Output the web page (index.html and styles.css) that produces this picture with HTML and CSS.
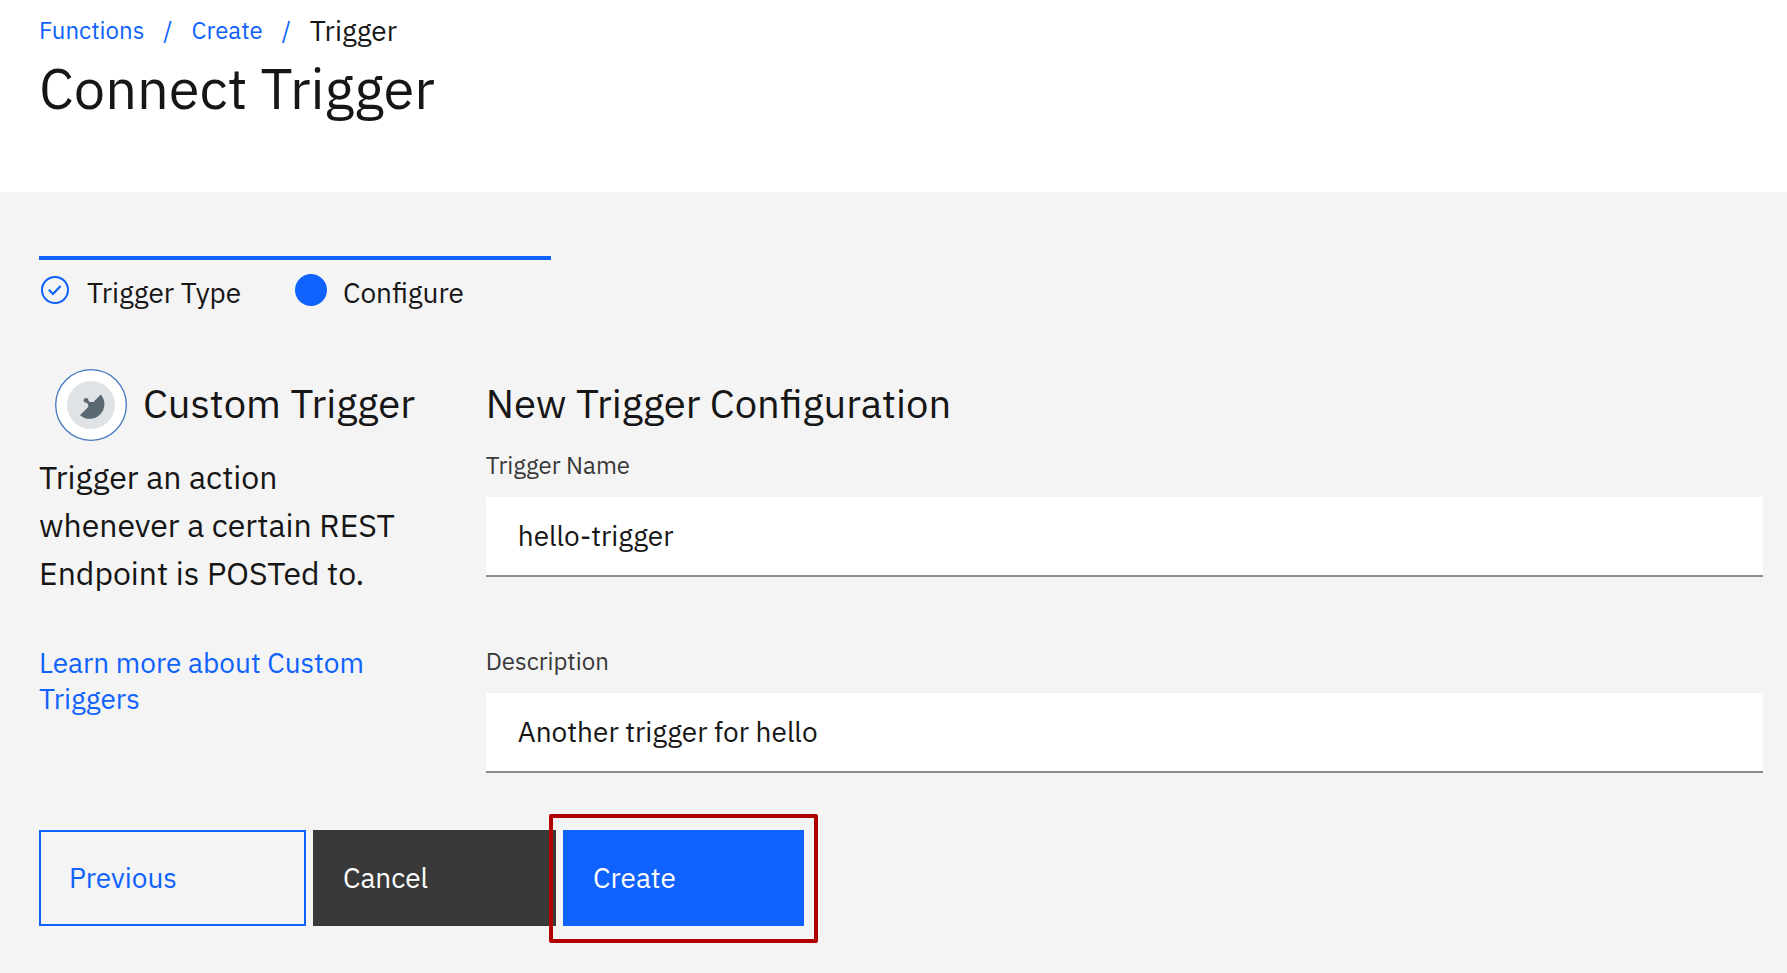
FILE: index.html
```html
<!DOCTYPE html>
<html lang="en">
<head>
<meta charset="utf-8">
<meta name="viewport" content="width=device-width, initial-scale=1">
<title>Connect Trigger</title>
<link rel="stylesheet" href="styles.css">
</head>
<body>
<header class="page-header">
  <nav class="breadcrumb" aria-label="Breadcrumb">
    <a class="link" href="#functions">Functions</a>
    <span class="separator">/</span>
    <a class="link" href="#create">Create</a>
    <span class="separator">/</span>
    <span class="current" aria-current="page">Trigger</span>
  </nav>
  <h1 class="page-title">Connect Trigger</h1>
</header>
<main class="content">
  <ol class="steps">
    <li class="step">
      <svg class="step-icon" viewBox="0 0 32 32" aria-hidden="true">
        <circle cx="16" cy="16" r="13" fill="none" stroke="#0f62fe" stroke-width="2"/>
        <path d="M9.800 15.800 14 20l7.600-8" fill="none" stroke="#0f62fe" stroke-width="2.200"/>
      </svg>
      <span class="step-label">Trigger Type</span>
    </li>
    <li class="step" aria-current="step">
      <svg class="step-icon" viewBox="0 0 32 32" aria-hidden="true">
        <circle cx="16" cy="16" r="16" fill="#0f62fe"/>
      </svg>
      <span class="step-label">Configure</span>
    </li>
  </ol>
  <form class="trigger-form">
    <div class="columns">
      <section class="summary">
        <div class="summary-head">
          <svg class="trigger-icon" viewBox="0 0 72 72" aria-hidden="true">
            <circle cx="36" cy="36" r="35.300" fill="#fff" stroke="#4178be" stroke-width="1.300"/>
            <circle cx="36" cy="36" r="24" fill="#dfe3e6"/>
            <path d="M45.700 25.400A14.700 14.700 0 0 1 25 46.200L33.200 38V35.500L31 33 32.800 31.500 34.800 33H38.500Z" fill="#5a6872"/>
            <circle cx="31" cy="31.300" r="2.400" fill="#5a6872"/>
          </svg>
          <h2 class="heading">Custom Trigger</h2>
        </div>
        <p class="summary-text">Trigger an action whenever a certain REST Endpoint is POSTed to.</p>
        <a class="link learn-more" href="#learn">Learn more about Custom Triggers</a>
      </section>
      <section class="configuration">
        <h2 class="heading">New Trigger Configuration</h2>
        <div class="fields">
          <div class="field">
            <label class="field-label" for="trigger-name">Trigger Name</label>
            <input class="field-input" id="trigger-name" type="text" value="hello-trigger">
          </div>
          <div class="field">
            <label class="field-label" for="description">Description</label>
            <input class="field-input" id="description" type="text" value="Another trigger for hello">
          </div>
        </div>
      </section>
    </div>
    <div class="actions">
      <button class="button button-outline" type="button">Previous</button>
      <button class="button button-dark" type="button">Cancel</button>
      <div class="highlight">
        <button class="button button-primary" type="button">Create</button>
      </div>
    </div>
  </form>
</main>
</body>
</html>
```
FILE: styles.css
```css
* {
  box-sizing: border-box;
}

body {
  margin: 0;
  min-height: 100vh;
  background: #f4f4f4;
  color: #161616;
  font-family: "IBM Plex Sans", Roboto, sans-serif;
  font-size: 28px;
}

h1,
h2,
p {
  margin: 0;
  font-weight: 400;
}

.link {
  color: #0f62fe;
  text-decoration: none;
}

.page-header {
  padding: 13px 39px 72px;
  background: #fff;
}

.breadcrumb {
  display: flex;
  align-items: flex-start;
  gap: 19px;
  font-size: 24px;
  line-height: 34px;
}

.separator {
  color: #0f62fe;
}

.current {
  font-size: 28px;
  line-height: 36px;
}

.page-title {
  margin-top: 7px;
  font-size: 56px;
  line-height: 64px;
}

.content {
  padding: 64px 24px 47px 39px;
}

.steps {
  display: grid;
  grid-template-columns: 256px 256px;
  width: max-content;
  margin: 0;
  padding: 14px 0 0;
  border-top: 4px solid #0f62fe;
  list-style: none;
}

.step {
  display: flex;
  gap: 16px;
}

.step-icon {
  width: 32px;
  height: 32px;
}

.step-label {
  line-height: 38px;
}

.columns {
  display: grid;
  grid-template-columns: 25vw minmax(0, 1fr);
  margin-top: 57px;
}

.summary {
  padding-right: 64px;
}

.summary-head {
  display: flex;
  gap: 16px;
  padding-left: 16px;
}

.trigger-icon {
  flex: none;
  width: 72px;
  height: 72px;
}

.heading {
  font-size: 40px;
  line-height: 68px;
  white-space: nowrap;
}

.summary-text {
  margin-top: 12px;
  font-size: 32px;
  line-height: 48px;
}

.learn-more {
  display: block;
  margin-top: 48px;
  line-height: 36px;
}

.fields {
  display: grid;
  gap: 68px;
  margin-top: 12px;
}

.field {
  display: grid;
  gap: 16px;
}

.field-label {
  color: #393939;
  font-size: 24px;
  line-height: 32px;
}

.field-input {
  width: 100%;
  height: 80px;
  padding: 0 32px 2px;
  border: 0;
  border-bottom: 2px solid #8c8c8c;
  border-radius: 0;
  background: #fff;
  color: inherit;
  font: inherit;
}

.actions {
  display: flex;
  gap: 7px;
  margin-top: 57px;
}

.button {
  height: 96px;
  padding: 0 30px 2px;
  border: 0;
  border-radius: 0;
  color: #fff;
  font: inherit;
  text-align: left;
}

.button-outline {
  width: 267px;
  padding: 0 28px 2px;
  border: 2px solid #0f62fe;
  background: transparent;
  color: #0f62fe;
}

.button-dark {
  width: 243px;
  background: #393939;
}

.button-primary {
  width: 241px;
  background: #0f62fe;
}

.highlight {
  position: relative;
}

.highlight::after {
  content: "";
  position: absolute;
  inset: -16px -14px -17px;
  border: 4px solid #b00000;
  border-radius: 2px;
  pointer-events: none;
}
```
